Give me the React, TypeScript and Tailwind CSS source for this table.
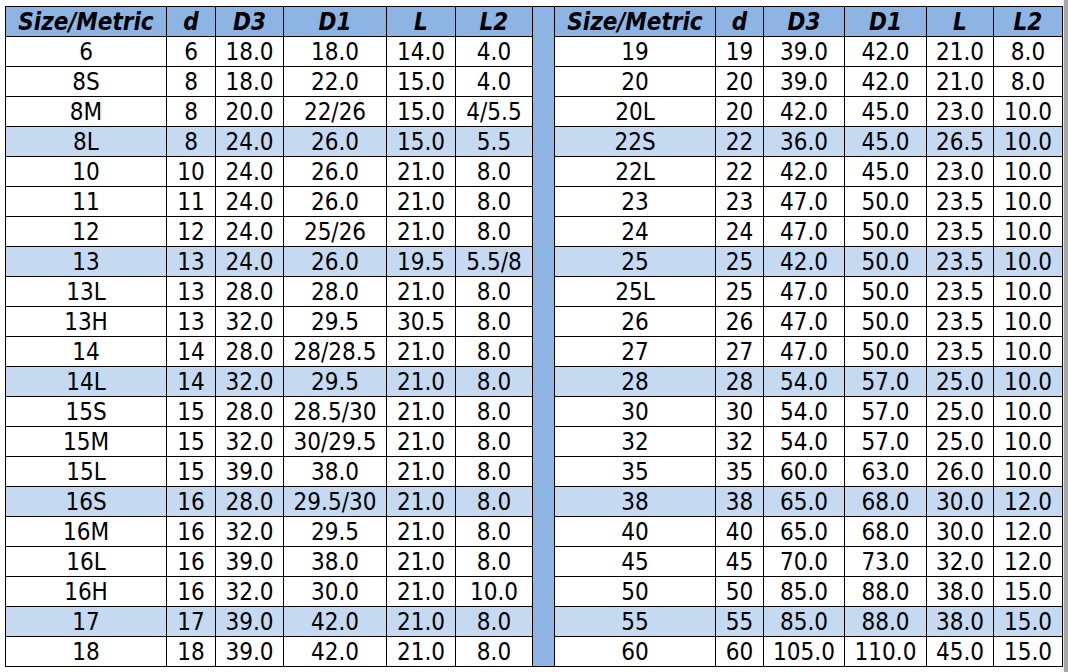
import React from 'react';

type Row = [string, string, string, string, string, string];

const LEFT: Row[] = [
  ['6', '6', '18.0', '18.0', '14.0', '4.0'],
  ['8S', '8', '18.0', '22.0', '15.0', '4.0'],
  ['8M', '8', '20.0', '22/26', '15.0', '4/5.5'],
  ['8L', '8', '24.0', '26.0', '15.0', '5.5'],
  ['10', '10', '24.0', '26.0', '21.0', '8.0'],
  ['11', '11', '24.0', '26.0', '21.0', '8.0'],
  ['12', '12', '24.0', '25/26', '21.0', '8.0'],
  ['13', '13', '24.0', '26.0', '19.5', '5.5/8'],
  ['13L', '13', '28.0', '28.0', '21.0', '8.0'],
  ['13H', '13', '32.0', '29.5', '30.5', '8.0'],
  ['14', '14', '28.0', '28/28.5', '21.0', '8.0'],
  ['14L', '14', '32.0', '29.5', '21.0', '8.0'],
  ['15S', '15', '28.0', '28.5/30', '21.0', '8.0'],
  ['15M', '15', '32.0', '30/29.5', '21.0', '8.0'],
  ['15L', '15', '39.0', '38.0', '21.0', '8.0'],
  ['16S', '16', '28.0', '29.5/30', '21.0', '8.0'],
  ['16M', '16', '32.0', '29.5', '21.0', '8.0'],
  ['16L', '16', '39.0', '38.0', '21.0', '8.0'],
  ['16H', '16', '32.0', '30.0', '21.0', '10.0'],
  ['17', '17', '39.0', '42.0', '21.0', '8.0'],
  ['18', '18', '39.0', '42.0', '21.0', '8.0'],
];

const RIGHT: Row[] = [
  ['19', '19', '39.0', '42.0', '21.0', '8.0'],
  ['20', '20', '39.0', '42.0', '21.0', '8.0'],
  ['20L', '20', '42.0', '45.0', '23.0', '10.0'],
  ['22S', '22', '36.0', '45.0', '26.5', '10.0'],
  ['22L', '22', '42.0', '45.0', '23.0', '10.0'],
  ['23', '23', '47.0', '50.0', '23.5', '10.0'],
  ['24', '24', '47.0', '50.0', '23.5', '10.0'],
  ['25', '25', '42.0', '50.0', '23.5', '10.0'],
  ['25L', '25', '47.0', '50.0', '23.5', '10.0'],
  ['26', '26', '47.0', '50.0', '23.5', '10.0'],
  ['27', '27', '47.0', '50.0', '23.5', '10.0'],
  ['28', '28', '54.0', '57.0', '25.0', '10.0'],
  ['30', '30', '54.0', '57.0', '25.0', '10.0'],
  ['32', '32', '54.0', '57.0', '25.0', '10.0'],
  ['35', '35', '60.0', '63.0', '26.0', '10.0'],
  ['38', '38', '65.0', '68.0', '30.0', '12.0'],
  ['40', '40', '65.0', '68.0', '30.0', '12.0'],
  ['45', '45', '70.0', '73.0', '32.0', '12.0'],
  ['50', '50', '85.0', '88.0', '38.0', '15.0'],
  ['55', '55', '85.0', '88.0', '38.0', '15.0'],
  ['60', '60', '105.0', '110.0', '45.0', '15.0'],
];

const HEADERS = ['Size/Metric', 'd', 'D3', 'D1', 'L', 'L2'];

// column widths in px: left half, separator, right half
const WIDTHS = [161, 49, 68, 103, 69, 77, 22, 161, 48, 81, 82, 67, 69];

export default function App() {
  return (
    <div
      className="flex h-[672px] w-[1068px] bg-white text-black"
      style={{ fontFamily: '"DejaVu Sans Condensed", "DejaVu Sans", sans-serif' }}
    >
      <div className="pl-[5px] pt-[6px]">
        <table className="w-[1058px] table-fixed border-collapse text-[24px] leading-none">
          <colgroup>
            {WIDTHS.map((w, i) => (
              <col key={i} style={{ width: w }} />
            ))}
          </colgroup>
          <tbody>
            <tr className="h-[30px]">
              {HEADERS.map((h) => (
                <th key={'l' + h} className="border border-black bg-[#8db4e2] p-0 text-center font-bold italic">
                  {h}
                </th>
              ))}
              <td rowSpan={22} className="border border-black bg-[#8db4e2] p-0" />
              {HEADERS.map((h) => (
                <th key={'r' + h} className="border border-black bg-[#8db4e2] p-0 text-center font-bold italic">
                  {h}
                </th>
              ))}
            </tr>
            {LEFT.map((row, i) => {
              const bg = i % 4 === 3 ? 'bg-[#c5d9f1]' : 'bg-white';
              return (
                <tr key={i} className="h-[30px]">
                  {row.map((c, j) => (
                    <td key={'l' + j} className={`border border-black p-0 text-center ${bg}`}>
                      {c}
                    </td>
                  ))}
                  {RIGHT[i].map((c, j) => (
                    <td key={'r' + j} className={`border border-black p-0 text-center ${bg}`}>
                      {c}
                    </td>
                  ))}
                </tr>
              );
            })}
          </tbody>
        </table>
      </div>
      <div className="ml-auto flex h-full">
        <div className="w-px bg-[#e8e8e8]" />
        <div className="w-[4px] bg-[#a8a8a8]" />
      </div>
    </div>
  );
}
